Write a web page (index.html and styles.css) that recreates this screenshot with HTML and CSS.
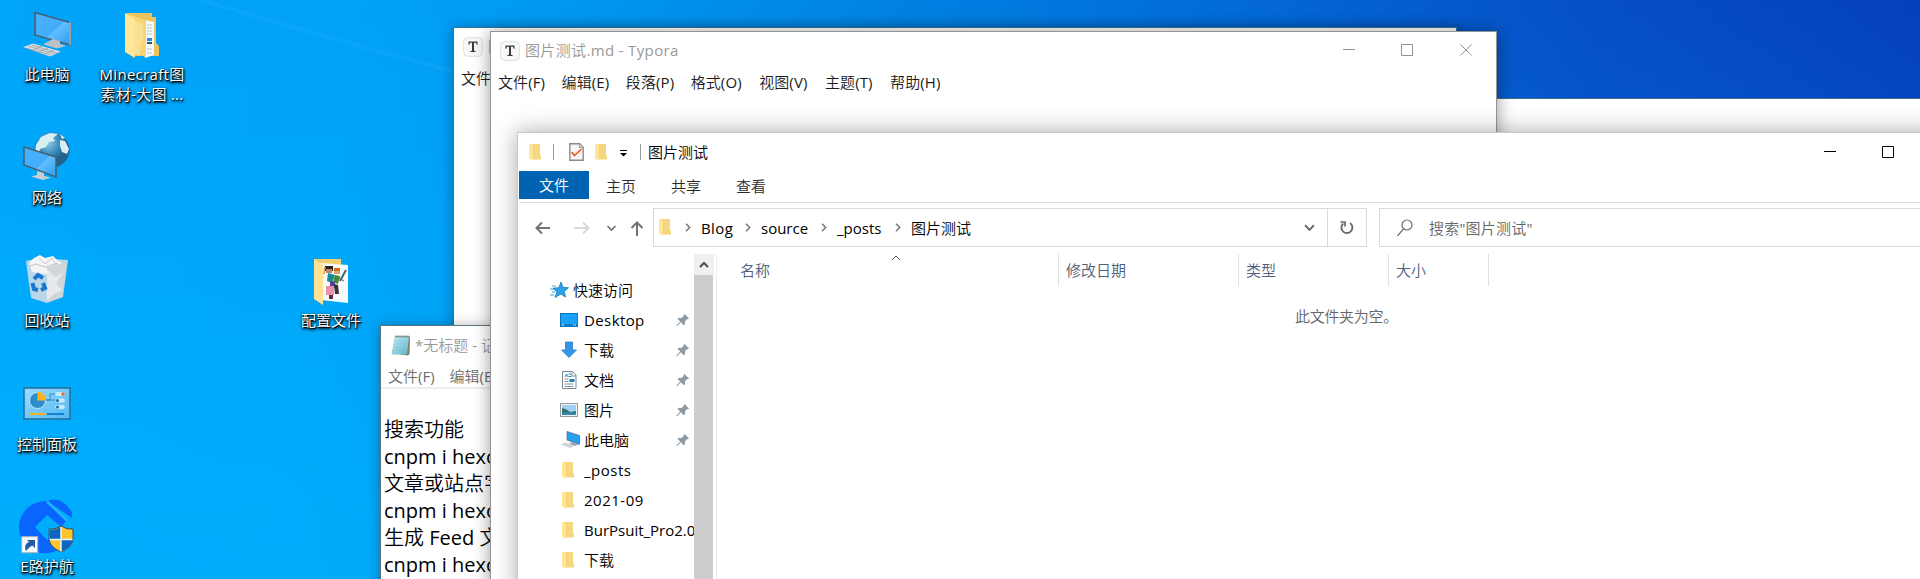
FILE: index.html
```
<!DOCTYPE html>
<html lang="zh-CN">
<head>
<meta charset="utf-8">
<title>桌面</title>
<link rel="stylesheet" href="styles.css">
</head>
<body>
<svg width="0" height="0" class="defs">
  <defs>
    <linearGradient id="screen" x1="0" y1="0" x2="1" y2="1"><stop offset="0" stop-color="#48b1fb"/><stop offset=".55" stop-color="#42adfc"/><stop offset=".56" stop-color="#65bfff"/><stop offset="1" stop-color="#2c9cf3"/></linearGradient>
    <linearGradient id="panel" x1="0" y1="0" x2="1" y2="1"><stop offset="0" stop-color="#9bdcff"/><stop offset="1" stop-color="#4eb8f3"/></linearGradient>
    <radialGradient id="globe" cx=".4" cy=".3"><stop offset="0" stop-color="#8cc8e8"/><stop offset=".6" stop-color="#3c8fbd"/><stop offset="1" stop-color="#20648f"/></radialGradient>
    <linearGradient id="pad" x1="0" y1="0" x2="1" y2="1"><stop offset="0" stop-color="#c9eef5"/><stop offset="1" stop-color="#59b5cc"/></linearGradient>
    <symbol id="folder" viewBox="0 0 12 17"><path d="M1.500 0H11v11l1 1v3.500H4z" fill="#f6d67f"/><path d="M0 0l4.500 2v12L3.500 17 0 14.500z" fill="#ffe596"/><path d="M4.500 2v12" stroke="#efc75c" stroke-width=".6"/></symbol>
    <symbol id="pin" viewBox="0 0 14 14"><path d="M8.600 1l4.400 4.400-1 .9-.8-.2-2.300 2.300.2 2.600-1.300 1.200-3-3L1.300 13 .4 13.200l.2-.9 3.600-3.800L1.500 6l1.200-1.200 2.700.2 2.400-2.300-.2-.9z" fill="#8e9ba5"/></symbol>
    <symbol id="chev" viewBox="0 0 6 9"><path d="M1 .8l3.700 3.700L1 8.200" fill="none" stroke="#777" stroke-width="1.500"/></symbol>
    <symbol id="down" viewBox="0 0 10 7"><path d="M1 1l4 4.200L9 1" fill="none" stroke="#6b6b6b" stroke-width="1.800"/></symbol>
    <symbol id="typora" viewBox="0 0 20 20"><rect x=".7" y=".7" width="18.600" height="18.600" rx="4" fill="#f9f9f9" stroke="#dcdcdc"/><path d="M3 8h14M3 11h14M3 14h14" stroke="#ededed" stroke-width=".6"/><path d="M5.500 4.500h9v3.200h-.8L13 5.700h-2v8l1.500.4v.9h-5v-.9l1.500-.4v-8H7l-.7 2h-.8z" fill="#3b3b3b"/></symbol>
  </defs>
</svg>

<main class="desktop">
  <svg class="streak" width="460" height="80" viewBox="0 0 460 80"><path d="M195 -2Q320 36 456 72" fill="none" stroke="#22aeff" stroke-width="4" opacity=".25"/></svg>

  <div class="shortcut pc">
    <svg width="48" height="46" viewBox="0 0 48 46"><path d="M12 0.500L47 10.500V33L12 23z" fill="url(#screen)" stroke="#46606f" stroke-width="1.600"/><path d="M46 10l2 .3V33l-2 .6z" fill="#989fa3"/><path d="M30 27l7 2v3l6 2-9 2.500-14-4z" fill="#bcc3c7"/><path d="M0 35l10-3.500 28 8-11 5z" fill="#d9dcdf"/><path d="M5 34l27 8M9 33l25 8M3 36l25 7M10 38l9-4M16 40l9-4M22 42l9-4" stroke="#939ca2" stroke-width=".7"/></svg>
    <span>此电脑</span></div>
  <div class="shortcut net">
    <svg width="48" height="50" viewBox="0 0 48 50"><circle cx="29" cy="18" r="17.500" fill="url(#globe)"/><path d="M13 13l5-8 9-4 8 1-5 4 2 3-6 1-3 5-6 2-1 5-4-1zM37 8l5 1 4 8-2 5-5-2-2-6zM37 2l5 4-3 1z" fill="#d9f0f2"/><path d="M1 15l32 10v20L1 33z" fill="url(#screen)" stroke="#46606f" stroke-width="1.500"/><path d="M14 39l7 2v3l7 1.500-8 2.500-12-3.500 6-1.500z" fill="#c9ced1"/></svg>
    <span>网络</span></div>
  <div class="shortcut bin">
    <svg width="44" height="48" viewBox="0 0 44 48"><path d="M1 6l13-3 29 2-5 37-16 6L6 43z" fill="#d8dfe4" opacity=".85"/><path d="M4 8l5-5 6-3 5 3 8-2 4 4 7 4-4 8-10 3L7 17z" fill="#f4f4f4"/><path d="M22 12l20-5-5 35-15 5z" fill="#d0d5d8"/><path d="M22 14l8 8 9-5-8 11 6 7-9 5-6 6z" fill="#e8e9ea"/><path d="M14 3l6 6 7-6 4 7M5 11l6-2 9 3 13-4" fill="none" stroke="#c3c8cc"/><g fill="none" stroke="#1878cf" stroke-width="4"><path d="M9 24l4-4 5 3"/><path d="M7.500 28l1.500 6 4 1"/><path d="M16 35l4-2-2-5"/></g></svg>
    <span>回收站</span></div>
  <div class="shortcut cpl">
    <svg width="48" height="33" viewBox="0 0 48 33"><rect x="1" y="1" width="46" height="31" fill="url(#panel)" stroke="#23729f" stroke-width="1.600"/><circle cx="14.500" cy="13.500" r="8" fill="#2e8ecb" stroke="#d8f2ff" stroke-width=".8"/><path d="M14.500 13.500v-9a9 9 0 0 1 9 9z" fill="#ffb31f"/><path d="M23 13h4V7h6M23 13h9" fill="none" stroke="#4188b1"/><path d="M34 7h6M35 13.500h5M34 20h6" stroke="#c2eaff" stroke-width="4" stroke-linecap="round"/><circle cx="40" cy="7" r="1.800" fill="#f56928"/><circle cx="34.500" cy="13.500" r="1.500" fill="#236a9a"/><circle cx="34.500" cy="20" r="1.500" fill="#236a9a"/><path d="M7 27h15" stroke="#ffad1c" stroke-width="2"/><path d="M24 27h17" stroke="#1282cf" stroke-width="2"/></svg>
    <span>控制面板</span></div>
  <div class="shortcut bank">
    <svg width="53" height="55" viewBox="0 0 53 55"><path d="M27 2.500A26 26 0 1 0 43 46L40 29l-14 12-12-13 12-12 14 12 5-6z" fill="#0866ff"/><path d="M26 2q14-6 25 11v6z" fill="#0866ff"/><path d="M26 2.500l20 19" stroke="#22b0ff" stroke-width="2.500" fill="none"/><path d="M40 27q6 4 12 3v9q0 9-12 14-12-5-12-14v-9q6 1 12-3z" fill="#ffc52e" stroke="#384c5a"/><path d="M40 27.500v13H28.500v-10q6 1 11.500-3zM40 40.500h11.500q-1 8-11.500 12z" fill="#0d65c1"/><path d="M40 28v24.500M28.500 40.500h23" stroke="#e5f3ff" stroke-width="1.500"/><rect x=".7" y="37.700" width="16" height="16" fill="#f7f8fa" stroke="#aab2bb"/><path d="M5 52c-2-5 0-8 3-9l-2-2h8v8l-2.500-2.500c-3 1-4 3-6.500 5.500z" fill="#245ba5"/></svg>
    <span>E路护航</span></div>
  <div class="shortcut mine">
    <svg width="36" height="47" viewBox="0 0 36 47"><path d="M3 1h25v4h4v26l3 3v10H7z" fill="#ecc45b"/><path d="M20 8l10 2v33l-9 3z" fill="#f5f8fa"/><path d="M23 13h5M23 16h5M23 19h5M23 22h5M23 37h5M23 41h5" stroke="#a8bccd" stroke-width=".8"/><path d="M23 26h5v3h-5z" fill="#3287dd"/><path d="M23 30h5v2h-5z" fill="#29566b"/><path d="M1 1l21 7v38l-10-7V8z" fill="#f8d477"/><path d="M1 1l10 6v39L1 40z" fill="#ffe699"/><path d="M11 8l8 5v15l-3 4v12l-5-2z" fill="#fae097"/></svg>
    <span>Minecraft图<br>素材-大图 ...</span></div>
  <div class="shortcut conf">
    <svg width="36" height="47" viewBox="0 0 36 47"><path d="M1 1h27v30H1z" fill="#f2ce72"/><path d="M8 5l27 2v38L8 42z" fill="#f8fafb"/><path d="M12 8h8v5h-8z" fill="#2a211e"/><path d="M13 11h6v4h-6z" fill="#be8468"/><path d="M21 10h6v3h-6z" fill="#d96a18"/><path d="M21 13h6v3h-6z" fill="#e0a27c"/><path d="M15 15l7 2-3 8-5-2z" fill="#198c91"/><path d="M22 17l5 1-2 8-5-2z" fill="#468b35"/><path d="M17 23l5 1v6h-5z" fill="#57399e"/><path d="M21 26l4 1 1 9h-4z" fill="#343338"/><path d="M13 28h8v9h-8z" fill="#e991a8"/><path d="M16 37h4v4h-4z" fill="#543144"/><path d="M27 23l6-11" stroke="#4b626a" stroke-width="2" fill="none"/><path d="M26 20l5 3" stroke="#4b626a"/><path d="M12 9l-1 7" stroke="#d09272" stroke-width="1.500"/><path d="M1 1l9 6v40L1 41z" fill="#ffe292"/></svg>
    <span>配置文件</span></div>

  <section class="window backdrop"></section>

  <section class="window typora back">
    <header class="titlebar"><svg width="20" height="20"><use href="#typora"/></svg><span>图片测试.md - Typora</span></header>
    <nav class="menu"><span>文件(F)</span><span>编辑(E)</span></nav>
  </section>

  <section class="window notepad">
    <header class="titlebar"><svg width="20" height="21" viewBox="0 0 20 21"><path d="M4 1.500h15l-.5 18L16 20.500 1 18z" fill="#837e5d"/><path d="M4 2h14l-2 17.500H.5z" fill="url(#pad)"/><path d="M4.500 1.500h13.500" stroke="#566772" stroke-width="2" stroke-dasharray="1 1"/><path d="M4 6h12M3.500 9h12M3 12h12M2.500 15h12" stroke="#76bdd0" stroke-width=".5"/></svg><span>*无标题 - 记事本</span></header>
    <nav class="menu"><span>文件(F)</span><span>编辑(E)</span></nav>
    <div class="note"><p>搜索功能</p><p>cnpm i hexo</p><p>文章或站点字数</p><p>cnpm i hexo</p><p>生成 Feed 文件</p><p>cnpm i hexo</p></div>
  </section>

  <section class="window typora front">
    <header class="titlebar"><svg width="20" height="20"><use href="#typora"/></svg><span>图片测试.md - Typora</span>
      <svg class="controls" width="130" height="13" viewBox="0 0 130 13"><path d="M0 5.500h12M58.500.5h11v11h-11zM117.500.5l11 11M128.500.5l-11 11" fill="none" stroke="#929292"/></svg></header>
    <nav class="menu"><span>文件(F)</span><span>编辑(E)</span><span>段落(P)</span><span>格式(O)</span><span>视图(V)</span><span>主题(T)</span><span>帮助(H)</span></nav>
  </section>

  <section class="window explorer">
    <header class="caption">
      <svg class="fold" width="12" height="17"><use href="#folder"/></svg><i class="sep"></i>
      <svg class="props" width="15" height="18" viewBox="0 0 15 18"><path d="M.8.800h10l3.400 3.400v13H.8z" fill="#f7f7f7" stroke="#8b8b8b" stroke-width="1.400"/><path d="M10.500.8v3.700h3.700" fill="#ddd" stroke="#999"/><path d="M2.500 9l3 3.500 7-6.500" fill="none" stroke="#f05a13" stroke-width="1.700"/></svg>
      <svg class="fold" width="12" height="17"><use href="#folder"/></svg>
      <svg class="more" width="7" height="6" viewBox="0 0 7 6"><path d="M0 .5h7" stroke="#000"/><path d="M0 3h7L3.500 6.500z" fill="#000"/></svg>
      <i class="sep second"></i><span>图片测试</span>
      <svg class="controls" width="71" height="13" viewBox="0 0 71 13"><path d="M0 5.500h12M58.500.5h11v11h-11z" fill="none" stroke="#000"/></svg>
    </header>
    <nav class="tabs"><b>文件</b><span>主页</span><span>共享</span><span>查看</span></nav>
    <div class="address">
      <svg class="arrows" width="134" height="39" viewBox="0 0 134 39" fill="none" stroke-width="2"><path d="M31 20H17.500M23 14.500L17.500 20l5.500 5.500" stroke="#737373"/><path d="M55 20h14M64 14.500l5.500 5.500-5.500 5.500" stroke="#d8d8d8"/><path d="M88.500 18l4 4 4-4" stroke="#737373" stroke-width="1.700"/><path d="M118 28V15M112.500 20l5.500-5.500 5.500 5.500" stroke="#737373"/></svg>
      <div class="path"><svg class="fold" width="12" height="17"><use href="#folder"/></svg><svg class="c" width="6" height="9"><use href="#chev"/></svg><span class="blog">Blog</span><svg class="c" width="6" height="9"><use href="#chev"/></svg><span class="source">source</span><svg class="c" width="6" height="9"><use href="#chev"/></svg><span class="posts">_posts</span><svg class="c" width="6" height="9"><use href="#chev"/></svg><span>图片测试</span><svg class="drop" width="11" height="8"><use href="#down"/></svg>
        <div class="refresh"><svg width="16" height="16" viewBox="0 0 16 16"><path d="M11 3A5.500 5.500 0 1 1 4.200 3.500" fill="none" stroke="#6b6b6b" stroke-width="1.900"/><path d="M1.500 2h4.500v4.500" fill="none" stroke="#6b6b6b" stroke-width="1.700"/></svg></div></div>
      <div class="search"><svg width="16" height="18" viewBox="0 0 16 18"><circle cx="10" cy="6" r="5" fill="none" stroke="#6e6e6e" stroke-width="1.200"/><path d="M6.500 9.800L.5 17" stroke="#6e6e6e" stroke-width="1.200"/></svg><span>搜索"图片测试"</span></div>
    </div>
    <div class="body">
      <aside class="tree">
        <div class="row root"><svg width="19" height="18" viewBox="0 0 19 18"><path d="M11 1l2 5.300 5.500.4-4.200 3.700 1.200 5.600-4.700-2.900L5 16.500l2-5.600-4-3.700 5.800-.5z" fill="#2da2e8" stroke="#147abd" stroke-width=".8"/><path d="M2 5h4M0 8h4M2 11h3M0 14h4" stroke="#3aa6e6"/></svg><span>快速访问</span></div>
        <div class="row"><svg width="18" height="14" viewBox="0 0 18 14"><rect x=".5" y=".5" width="17" height="13" fill="#1ba1fa" stroke="#0877b9"/><path d="M1 12h16" stroke="#075895"/><path d="M2 12h2M13 12h1M15 12h1" stroke="#fff"/></svg><span class="desktop-label">Desktop</span><svg class="pin" width="14" height="14"><use href="#pin"/></svg></div>
        <div class="row"><svg width="18" height="18" viewBox="0 0 18 18"><path d="M5.500 1h7v8h4L9 16.500 1.500 9h4z" fill="#3396e6" stroke="#257cc5" stroke-width=".8"/></svg><span>下载</span><svg class="pin" width="14" height="14"><use href="#pin"/></svg></div>
        <div class="row"><svg width="18" height="18" viewBox="0 0 18 18"><path d="M2.500.5h10l3.500 3.500v13.500H2.500z" fill="#fff" stroke="#7d8589"/><path d="M12 1v4h4M4.500 8h4M4.500 10.500h4M4.500 13h9M4.500 15.500h9" fill="none" stroke="#7c96a5"/><path d="M5 6l1.500-3L8 6M8.500 3h3M8.500 5.500h3" fill="none" stroke="#168bd2"/><path d="M9.500 8h5v3h-5z" fill="#2680ae"/></svg><span>文档</span><svg class="pin" width="14" height="14"><use href="#pin"/></svg></div>
        <div class="row"><svg width="18" height="14" viewBox="0 0 18 14"><rect x=".6" y=".6" width="16.800" height="12.800" fill="#fff" stroke="#8b9194"/><path d="M2 2h14v10H2z" fill="#9dd0f1"/><path d="M2 5q5 1 8 4l6-1v4H2z" fill="#35706c"/><path d="M2 9.500h14V12H2z" fill="#3885ae"/></svg><span>图片</span><svg class="pin" width="14" height="14"><use href="#pin"/></svg></div>
        <div class="row"><svg class="minipc" width="20" height="18" viewBox="0 0 20 18"><path d="M7 .5l12.500 4v9L7 9z" fill="#25a0ef" stroke="#5e7481" stroke-width=".8"/><path d="M12 11l6 2.500-3 1.500-6-2z" fill="#9aa4aa"/><path d="M.5 13.500l5-2 9 3-4 2.500z" fill="#cfd4d8"/></svg><span>此电脑</span><svg class="pin" width="14" height="14"><use href="#pin"/></svg></div>
        <div class="row"><svg class="fold" width="12" height="17"><use href="#folder"/></svg><span class="date">_posts</span></div>
        <div class="row"><svg class="fold" width="12" height="17"><use href="#folder"/></svg><span class="date">2021-09</span></div>
        <div class="row"><svg class="fold" width="12" height="17"><use href="#folder"/></svg><span>BurPsuit_Pro2.0</span></div>
        <div class="row"><svg class="fold" width="12" height="17"><use href="#folder"/></svg><span>下载</span></div>
      </aside>
      <div class="scroll"><div class="up"><svg width="10" height="7" viewBox="0 0 10 7"><path d="M1 6l4-4 4 4" fill="none" stroke="#505050" stroke-width="2"/></svg></div><div class="thumb"></div></div>
      <div class="files">
        <div class="columns"><span class="name">名称<svg width="10" height="6" viewBox="0 0 10 6"><path d="M1 5l4-4 4 4" fill="none" stroke="#666"/></svg></span><span class="modified">修改日期</span><span class="type">类型</span><span class="size">大小</span></div>
        <p class="empty">此文件夹为空。</p>
      </div>
    </div>
  </section>
</main>
</body>
</html>
```
FILE: styles.css
```
* { box-sizing: border-box; }
body { margin: 0; overflow: hidden; font: 15px/20px "Open Sans", "Noto Sans CJK SC DemiLight", "Noto Sans CJK SC Light", "Noto Sans CJK SC", sans-serif; color: #000; }
p { margin: 0; }
svg { display: block; flex: none; overflow: visible; }
span { white-space: nowrap; }
.defs { position: absolute; }

.desktop {
  position: relative; width: 1920px; height: 579px; overflow: hidden;
  background:
    linear-gradient(to bottom, rgba(0,90,210,.04), rgba(0,190,255,.35)),
    linear-gradient(97deg, #00a7fb 0, #00a4f9 18%, #009bf3 28%, #0086e5 43%, #0075dc 55%, #0461d0 68%, #054ec6 80%, #0545c0 90%, #053bb9 100%);
}
.streak { position: absolute; left: 0; top: 0; }

/* Desktop shortcuts */
.shortcut { position: absolute; width: 94px; display: flex; flex-direction: column; justify-content: space-between; align-items: center; color: #fff; text-align: center; text-shadow: 1px 1px 1px #000, 0 1px 3px #000, 1px 2px 3px rgba(0,0,0,.7); }
.pc { left: 0; top: 12px; height: 72px; }
.net { left: 0; top: 132px; height: 75px; }
.bin { left: 0; top: 255px; height: 75px; }
.cpl { left: 0; top: 387px; height: 67px; }
.bank { left: 0; top: 499px; height: 77px; }
.mine { left: 95px; top: 12px; height: 92px; }
.conf { left: 284px; top: 258px; height: 72px; }
.mine span { letter-spacing: .3px; }

/* Windows */
.window { position: absolute; background: #fff; overflow: hidden; }
.backdrop { left: 1200px; top: 98px; width: 740px; height: 500px; border-top: 1px solid #49678c; }
.titlebar { display: flex; align-items: center; color: #999; }
.menu { display: flex; color: #1b1b1b; }

.typora .titlebar { height: 38px; padding-left: 9px; gap: 5px; }
.typora .titlebar span { padding-bottom: 2px; letter-spacing: .35px; }
.typora .menu { height: 23px; padding-left: 7px; gap: 16.500px; align-items: center; letter-spacing: .1px; }
.typora.back { left: 453px; top: 27px; width: 1004px; height: 570px; border: 1px solid #31719d; box-shadow: 0 1px 12px rgba(0,0,0,.32); }
.typora.front { left: 490px; top: 31px; width: 1007px; height: 570px; border: 1px solid #949494; box-shadow: 0 1px 16px rgba(0,0,0,.4); }
.front .controls { margin-left: auto; margin-right: 23px; margin-bottom: 1px; }
.front .menu span:nth-child(n+5) { margin-left: 1px; }

.notepad { left: 380px; top: 325px; width: 500px; height: 300px; border: 1px solid #5b7480; box-shadow: 0 1px 12px rgba(0,0,0,.32); }
.notepad .titlebar { height: 38px; padding-left: 10px; gap: 4px; }
.notepad .menu { height: 25px; padding-left: 7px; gap: 15px; align-items: center; color: #6d6d6d; border-bottom: 2px solid #eee; }
.note { padding: 27px 0 0 3px; font-size: 20px; line-height: 27px; }
.note p { white-space: nowrap; }

/* File explorer */
.explorer { left: 517px; top: 132px; width: 1441px; height: 480px; border: 1px solid #c9c9c9; padding-left: 1px; box-shadow: 0 0 22px rgba(0,0,0,.34); }
.caption { width: 1401px; height: 38px; display: flex; align-items: center; padding-left: 10px; }
.sep { width: 1px; height: 16px; background: #999; margin: 0 15px 0 12px; }
.props { margin-right: 11px; }
.more { margin-left: 13px; margin-top: 2px; }
.sep.second { margin: 0 7px 0 13px; }
.caption .controls { margin-left: auto; margin-right: 25px; }
.tabs { width: 1401px; height: 32px; display: flex; align-items: flex-start; line-height: 31px; border-bottom: 1px solid #dadada; color: #2b2b2b; }
.tabs b { width: 70px; height: 28px; margin-right: 17px; text-align: center; line-height: 28px; font-weight: 400; color: #fff; background: #0063b1; }
.tabs span { margin-right: 35px; }
.address { display: flex; padding-top: 5px; }
.path { display: flex; align-items: center; width: 714px; height: 39px; border: 1px solid #d9d9d9; padding-left: 5px; }
.address .arrows, .address .path, .address .search { flex: none; }
.path .fold { margin-right: 14px; }
.path .c { margin-right: 10px; }
.path .blog { width: 44px; letter-spacing: .4px; }
.path .source { width: 60px; }
.path .posts { width: 58px; }
.drop { margin-left: auto; margin-right: 12px; }
.refresh { display: flex; align-items: center; justify-content: center; width: 39px; height: 37px; border-left: 1px solid #d9d9d9; }
.search { display: flex; align-items: center; margin-left: 12px; width: 580px; height: 39px; border: 1px solid #d9d9d9; padding-left: 17px; gap: 16px; color: #666; }
.search span { letter-spacing: .2px; }
.body { display: flex; padding-top: 7px; height: 330px; }
.tree { width: 175px; height: 325px; padding: 21px 0 0 41px; overflow: hidden; }
.row { display: flex; align-items: center; height: 30px; gap: 6px; }
.row.root { margin-left: -10px; gap: 4px; }
.row .pin { margin-left: auto; margin-right: 4px; }
.row .fold { margin: 0 4px 0 2px; }
.row .minipc { margin-right: -2px; }
.row .desktop-label { letter-spacing: .4px; }
.row .date { letter-spacing: .5px; }
.scroll { width: 23px; height: 325px; border-right: 1px solid #eee; }
.scroll .up { width: 20px; height: 21px; display: flex; align-items: center; justify-content: center; background: #f0f0f0; }
.scroll .thumb { width: 19px; height: 304px; background: #cdcdcd; }
.files { width: 1203px; }
.columns { display: flex; height: 32px; line-height: 32px; color: #4c607a; }
.columns span { border-right: 1px solid #e2e2e2; padding-left: 7px; }
.columns .name { display: flex; width: 342px; padding-left: 23px; }
.name svg { margin: 1px 0 0 121px; }
.columns .modified { width: 180px; }
.columns .type { width: 150px; }
.columns .size { width: 100px; }
.empty { padding: 20px 0 0 578px; color: #666; letter-spacing: -.3px; }
```
